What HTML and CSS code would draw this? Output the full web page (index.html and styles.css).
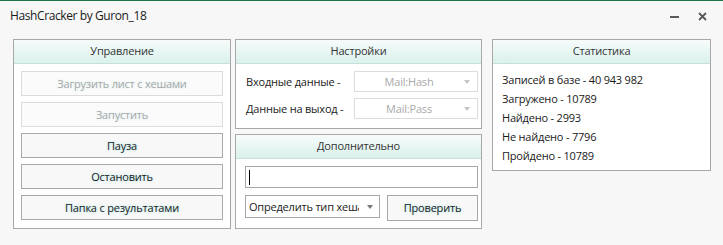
FILE: index.html
```html
<!DOCTYPE html>
<html lang="ru">
<head>
<meta charset="utf-8">
<title>HashCracker by Guron_18</title>
<link rel="stylesheet" href="styles.css">
</head>
<body>
<div class="window">
  <div class="titlebar">
    <span class="title">HashCracker by Guron_18</span>
    <div class="controls">
      <span class="minimize"></span>
      <svg class="close" width="9" height="9" viewBox="0 0 9 9"><path d="M1 1L8 8M8 1L1 8" stroke="#5a5a5a" stroke-width="1.8"/></svg>
    </div>
  </div>
  <div class="content">
    <section class="panel panel-left">
      <div class="panel-header">Управление</div>
      <div class="panel-body buttons">
        <div class="btn disabled">Загрузить лист с хешами</div>
        <div class="btn disabled">Запустить</div>
        <div class="btn">Пауза</div>
        <div class="btn">Остановить</div>
        <div class="btn">Папка с результатами</div>
      </div>
    </section>
    <div class="column-mid">
      <section class="panel panel-settings">
        <div class="panel-header">Настройки</div>
        <div class="panel-body settings">
          <div class="row">
            <span class="label">Входные данные -</span>
            <div class="combo disabled"><span class="combo-text">Mail:Hash</span><span class="arrow"></span></div>
          </div>
          <div class="row">
            <span class="label">Данные на выход -</span>
            <div class="combo disabled"><span class="combo-text">Mail:Pass</span><span class="arrow"></span></div>
          </div>
        </div>
      </section>
      <section class="panel panel-extra">
        <div class="panel-header">Дополнительно</div>
        <div class="panel-body extra">
          <div class="textbox"><span class="caret"></span></div>
          <div class="extra-row">
            <div class="combo combo-type"><span class="combo-text">Определить тип хеша</span><span class="arrow dark"></span></div>
            <div class="btn btn-check">Проверить</div>
          </div>
        </div>
      </section>
    </div>
    <section class="panel panel-stats">
      <div class="panel-header">Статистика</div>
      <div class="panel-body stats">
        <div>Записей в базе - 40 943 982</div>
        <div>Загружено - 10789</div>
        <div>Найдено - 2993</div>
        <div>Не найдено - 7796</div>
        <div>Пройдено - 10789</div>
      </div>
    </section>
  </div>
</div>
</body>
</html>
```

FILE: styles.css
```css
* { box-sizing: border-box; }
html, body { margin: 0; padding: 0; }
body {
  background: #f7f7f7;
  font-family: "Open Sans", "Noto Sans", sans-serif;
  font-size: 11px;
  letter-spacing: -0.2px;
  color: #222;
  width: 723px;
  height: 245px;
  overflow: hidden;
}
.window {
  border-top: 1px solid #217346;
  height: 245px;
}
.titlebar {
  height: 38px;
  display: flex;
  justify-content: space-between;
  align-items: flex-start;
  padding: 6px 16px 0 10px;
}
.title {
  font-size: 12px;
  letter-spacing: -0.4px;
  color: #1a1a1a;
  line-height: 18px;
}
.controls {
  display: flex;
  align-items: center;
  gap: 19px;
  padding-top: 5px;
}
.minimize {
  display: block;
  width: 9px;
  height: 2px;
  background: #5a5a5a;
}
.close { display: block; }
.content {
  display: flex;
  align-items: flex-start;
  padding-left: 13px;
}
.panel {
  border: 1px solid #a8a8a8;
  background: #fff;
}
.panel-header {
  height: 24px;
  line-height: 22px;
  text-align: center;
  color: #333;
  background: linear-gradient(#f7fcfb, #d9f1ec);
  border-bottom: 1px solid #c9dfda;
}
.panel-left { width: 218px; height: 190px; }
.buttons {
  display: flex;
  flex-direction: column;
  gap: 6px;
  padding: 7px 7px 0 7px;
}
.btn {
  height: 25px;
  border: 1px solid #a8a8a8;
  background: #f8f8f8;
  text-align: center;
  line-height: 23px;
  color: #1a1a1a;
  text-shadow: 0 0 3px rgba(120, 220, 220, 0.7);
}
.btn.disabled {
  border-color: #dcdcdc;
  background: #fbfbfb;
  color: #a9a9a9;
  text-shadow: 0 0 2px rgba(170, 225, 225, 0.5);
}
.column-mid {
  margin-left: 4px;
  width: 247px;
  display: flex;
  flex-direction: column;
  gap: 5px;
}
.panel-settings { height: 90px; }
.settings {
  display: flex;
  flex-direction: column;
  gap: 6px;
  padding: 7px 3px 0 10px;
}
.row {
  display: flex;
  justify-content: space-between;
  align-items: center;
  height: 21px;
}
.label { color: #222; }
.combo {
  position: relative;
  width: 124px;
  height: 21px;
  border: 1px solid #dcdcdc;
  background: #fff;
  line-height: 19px;
  text-align: center;
}
.combo.disabled .combo-text { color: #a9a9a9; padding-right: 14px; }
.arrow {
  position: absolute;
  right: 7px;
  top: 8px;
  width: 0;
  height: 0;
  border-left: 3.5px solid transparent;
  border-right: 3.5px solid transparent;
  border-top: 4px solid #c4c4c4;
}
.arrow.dark { border-top-color: #777; }
.panel-extra { height: 95px; }
.extra {
  padding: 7px 3px 0 9px;
}
.textbox {
  height: 22px;
  border: 1px solid #a8a8a8;
  background: #fff;
  display: flex;
  align-items: center;
  padding-left: 3px;
}
.caret {
  display: block;
  width: 1px;
  height: 15px;
  background: #000;
}
.extra-row {
  margin-top: 7px;
  display: flex;
  justify-content: space-between;
  align-items: flex-start;
}
.combo-type {
  width: 135px;
  height: 23px;
  border-color: #a8a8a8;
  text-align: left;
  line-height: 21px;
  padding-left: 3px;
  overflow: hidden;
  white-space: nowrap;
}
.combo-type .combo-text {
  display: block;
  width: 110px;
  overflow: hidden;
  color: #1a1a1a;
}
.combo-type .arrow { top: 9px; right: 6px; }
.btn-check {
  width: 91px;
  height: 26px;
  line-height: 24px;
}
.panel-stats {
  margin-left: 10px;
  width: 219px;
  height: 132px;
}
.stats {
  padding: 6px 9px 0 9px;
  line-height: 19px;
  color: #1a1a1a;
}
```
